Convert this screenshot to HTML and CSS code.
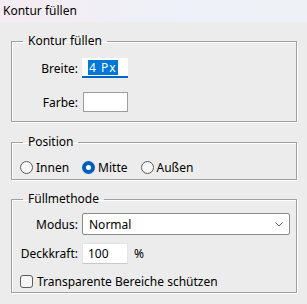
FILE: index.html
```html
<!DOCTYPE html>
<html lang="de">
<head>
    <meta charset="UTF-8">
    <meta name="viewport" content="width=device-width, initial-scale=1.0">
    <title>Kontur füllen</title>
    <link rel="stylesheet" href="styles.css">
</head>
<body>
    <div class="titlebar">Kontur füllen</div>

    <div class="panel">
        <fieldset class="group group-stroke">
            <legend>Kontur füllen</legend>
            <div class="row">
                <span class="label">Breite:</span>
                <div class="field field-focus"><span class="selected">4 Px</span></div>
            </div>
            <div class="row row-color">
                <span class="label">Farbe:</span>
                <div class="swatch"></div>
            </div>
        </fieldset>

        <fieldset class="group group-position">
            <legend>Position</legend>
            <div class="radios">
                <label class="option"><span class="radio"></span>Innen</label>
                <label class="option"><span class="radio checked"></span>Mitte</label>
                <label class="option"><span class="radio"></span>Außen</label>
            </div>
        </fieldset>

        <fieldset class="group group-blend">
            <legend>Füllmethode</legend>
            <div class="row">
                <span class="label">Modus:</span>
                <div class="select">
                    <span>Normal</span>
                    <svg width="8" height="5" viewBox="0 0 8 5"><path d="M0.5 0.5 L4 4 L7.5 0.5" fill="none" stroke="#606060" stroke-width="1"/></svg>
                </div>
            </div>
            <div class="row row-opacity">
                <span class="label">Deckkraft:</span>
                <div class="field field-plain">100</div>
                <span class="unit">%</span>
            </div>
            <label class="check-row"><span class="checkbox"></span>Transparente Bereiche schützen</label>
        </fieldset>
    </div>
</body>
</html>
```

FILE: styles.css
```css
body {
    margin: 0;
    width: 307px;
    height: 304px;
    background: #ececec;
    font-family: "Noto Sans", sans-serif;
    font-size: 12px;
    color: #000;
}
.titlebar {
    height: 22px;
    line-height: 22px;
    padding-left: 3px;
    background: linear-gradient(90deg, #f4ecf1, #eef1f9 60%, #eef2f6);
}
.panel {
    padding: 11px 10px 0 11px;
}
.group {
    margin: 0;
    padding: 0;
    min-width: 0;
    border: 1px solid #a0a0a0;
    box-shadow: inset 1px 1px 0 #fff, 1px 1px 0 #fff;
}
.group legend {
    margin-left: 11px;
    padding: 0 5px;
    line-height: 16px;
}
.group-stroke {
    padding: 9px 0 9px 0;
}
.group-position {
    margin-top: 12px;
    padding: 9px 0 4px 0;
}
.group-blend {
    margin-top: 11px;
    padding: 6px 0 3px 0;
}
.row {
    display: flex;
    align-items: center;
    gap: 4px;
}
.row-color {
    margin-top: 14px;
}
.row-opacity {
    margin-top: 8px;
}
.label {
    width: 66px;
    text-align: right;
}
.field {
    width: 46px;
    height: 21px;
    box-sizing: border-box;
    background: #fff;
    padding-left: 6px;
    display: flex;
    align-items: center;
}
.field-focus {
    height: 20px;
    border-bottom: 2px solid #0067c0;
}
.field-plain {
    border: 1px solid #e4e4e4;
    border-bottom-color: #c8c8c8;
    padding-left: 5px;
}
.selected {
    background: #0078d7;
    color: #fff;
    line-height: 15px;
    padding: 0 1px;
    letter-spacing: 1px;
}
.swatch {
    width: 45px;
    height: 20px;
    margin-left: 1px;
    box-sizing: border-box;
    border: 1px solid #9c9c9c;
    background: #fff;
}
.unit {
    margin-left: 2px;
}
.select {
    width: 208px;
    height: 22px;
    box-sizing: border-box;
    border: 1px solid #8a8a8a;
    border-radius: 2px;
    background: #fff;
    display: flex;
    align-items: center;
    justify-content: space-between;
    padding: 0 6px 0 6px;
}
.radios {
    display: flex;
    align-items: center;
    padding-left: 8px;
    height: 16px;
}
.option {
    display: flex;
    align-items: center;
    gap: 3px;
    margin-right: 13px;
}
.radio {
    width: 13px;
    height: 13px;
    box-sizing: border-box;
    border: 1px solid #5c5c5c;
    border-radius: 50%;
    background: #f6f6f6;
}
.radio.checked {
    border: 4px solid #005fb8;
    background: #fff;
}
.check-row {
    display: flex;
    align-items: center;
    gap: 4px;
    height: 16px;
    margin-top: 9px;
    padding-left: 8px;
}
.checkbox {
    width: 13px;
    height: 13px;
    box-sizing: border-box;
    border: 1px solid #5c5c5c;
    border-radius: 3px;
    background: #f6f6f6;
}
```
